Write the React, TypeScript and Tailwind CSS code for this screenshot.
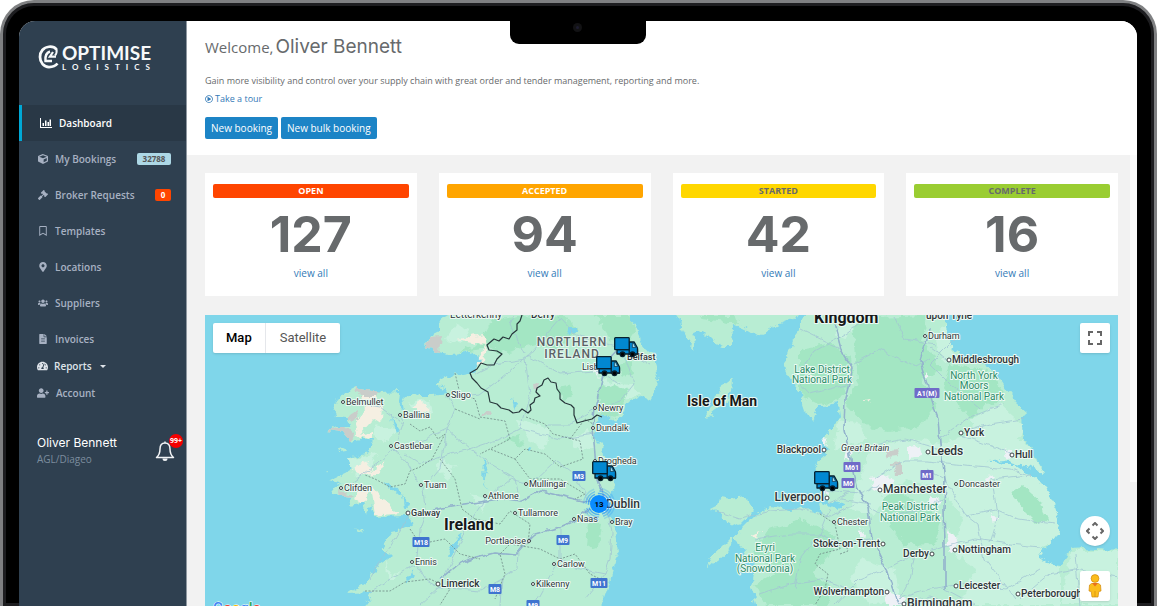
import type { ReactNode } from "react";
import {
  FaCube,
  FaFileAlt,
  FaGavel,
  FaMapMarkerAlt,
  FaRegBookmark,
  FaRegPlayCircle,
  FaTachometerAlt,
  FaUserPlus,
  FaUsers,
} from "react-icons/fa";

function ChartIcon() {
  return (
    <svg viewBox="0 0 24 20" className="h-[10px] w-3" fill="currentColor" aria-hidden="true">
      <path d="M0 0h2v18h22v2H0zM5 10h3v6H5zM10 5h3v11h-3zM15 8h3v8h-3zM19 3h3v13h-3z" />
    </svg>
  );
}

function BellIcon() {
  return (
    <svg viewBox="0 0 20 22" className="h-[22px] w-5" fill="none" stroke="#f2f4f6" aria-hidden="true">
      <path d="M10 1.500v2M10 3C6.500 3 5 5.800 5 9c0 4.500-1.200 6.500-3.500 8.500h17C16.200 15.500 15 13.500 15 9c0-3.200-1.500-6-5-6z" strokeWidth="1.500" strokeLinejoin="round" />
      <path d="M7.500 18.500h5a2.500 2.500 0 0 1-5 0z" fill="#f2f4f6" stroke="none" />
    </svg>
  );
}

function Logo() {
  return (
    <div className="flex items-start gap-[3px] pl-[19px] pt-[22px] text-[#f7f9fa]">
      <svg viewBox="0 0 42 48" className="mt-[2px] h-6 w-[21px]" fill="none" stroke="currentColor" aria-label="Optimise Logistics" role="img">
        <path d="M37 9C33 4 27 3 22 3.500C11 4.500 4 13 4 24s8 20 18 20c7 0 13-2 17-7" strokeWidth="5.500" />
        <path d="M37 8C38 14 37 18 34 21" strokeWidth="4" />
        <path d="M24 13C18 15 14 22 15 32h13" strokeWidth="5" />
        <path d="M30 14L24 23h12" strokeWidth="4.500" />
      </svg>
      <div className="font-['Lato',sans-serif]">
        <div className="text-[19px] font-bold leading-5">OPTIMISE</div>
        <div className="text-[8px] font-bold leading-[8px] tracking-[6px]">LOGISTICS</div>
      </div>
    </div>
  );
}

type NavItem = { label: string; icon: ReactNode; badge?: string; badgeClass?: string };

const navItems: NavItem[] = [
  { label: "My Bookings", icon: <FaCube />, badge: "32788", badgeClass: "w-[34px] bg-[#add8e6] text-[#555]" },
  { label: "Broker Requests", icon: <FaGavel />, badge: "0", badgeClass: "w-4 bg-[#ff4500] text-white" },
  { label: "Templates", icon: <FaRegBookmark /> },
  { label: "Locations", icon: <FaMapMarkerAlt /> },
  { label: "Suppliers", icon: <FaUsers /> },
  { label: "Invoices", icon: <FaFileAlt /> },
];

function Sidebar() {
  return (
    <aside className="w-[168px] shrink-0 border-r border-[#8f98a1] bg-[#2f4050] text-[10px] font-semibold text-[#a7b1c2]">
      <div className="h-[84px]">
        <Logo />
      </div>
      <nav aria-label="Main">
        <a href="#dashboard" className="flex h-9 items-center gap-[7px] border-l-[3px] border-[#00a8d6] bg-[#293846] pl-[18px] text-white">
          <ChartIcon />
          Dashboard
        </a>
        {navItems.map((item) => (
          <a key={item.label} href="#section" className="flex h-9 items-center pl-[18px] pr-[15px]">
            <span className="mr-[7px] w-[11px] [&>svg]:mx-auto">{item.icon}</span>
            {item.label}
            {item.badge && (
              <span className={`ml-auto rounded-xs text-center text-[8px] font-bold leading-3 ${item.badgeClass}`}>{item.badge}</span>
            )}
          </a>
        ))}
        <a href="#reports" className="flex h-[18px] items-center pl-[18px] text-[#dfe4ea]">
          <FaTachometerAlt className="mr-[6px] w-[11px]" />
          Reports
          <span className="ml-2 border-x-[3px] border-t-[3px] border-x-transparent border-t-current" />
        </a>
        <a href="#account" className="flex h-9 items-center pl-[18px]">
          <FaUserPlus className="mr-[7px] w-3" />
          Account
        </a>
      </nav>
      <div className="flex items-center justify-between pl-[18px] pr-[11px] pt-6">
        <div>
          <div className="font-['Inter',sans-serif] text-[12px] font-normal leading-4 text-white">Oliver Bennett</div>
          <div className="text-[10px] font-normal leading-4 text-[#7c8d9e]">AGL/Diageo</div>
        </div>
        <button type="button" aria-label="Notifications" className="relative">
          <BellIcon />
          <span className="absolute -right-2 -top-[6px] size-[14px] rounded-full bg-[#f50000] text-center text-[7px] font-bold leading-[14px] text-white">99+</span>
        </button>
      </div>
    </aside>
  );
}

const stats = [
  { label: "OPEN", value: 127, bar: "bg-[#ff4500] text-white" },
  { label: "ACCEPTED", value: 94, bar: "bg-[#ffa500] text-white" },
  { label: "STARTED", value: 42, bar: "bg-[#ffd700] text-[#676a6c]" },
  { label: "COMPLETE", value: 16, bar: "bg-[#9acd32] text-[#676a6c]" },
];

const landPaths = [
  // Ireland
  "M628 310L630 322 637 328 640 342 647 351 655 355 658 373 656 390 650 400 640 398 627 405 625 413 617 423 610 420 603 416 597 423 593 436 602 445 603 458 609 465 614 480 613 492 603 503 604 512 613 518 616 534 619 552 613 572 607 592 600 612H360L373 594 348 595 367 582 377 568 393 557 388 552 380 552 392 532 402 530 413 525 408 517 375 518 371 505 365 515 362 505 350 507 352 498 333 495 332 488 342 485 330 481 343 475 352 470 348 460 360 455 370 453 372 440 361 440 350 443 343 433 327 431 337 427 350 427 345 418 336 417 333 410 337 402 342 394 347 393 355 389 380 393 400 392 399 404 405 412 403 400 410 394 420 397 433 397 446 395 447 389 435 387 440 381 447 377 459 376 470 374 478 367 482 360 472 352 462 355 450 356 438 354 425 347 430 338 440 333 440 323 450 315 455 310z",
  // Great Britain
  "M674 310L681 328 687 340 697 352 693 335 703 333 712 342 723 347 732 347 733 325 744 330 755 337 767 332 780 324 790 320 805 315 797 332 790 351 785 365 788 378 797 385 801 400 805 412 813 423 818 408 838 404 840 417 833 428 823 437 827 455 820 460 814 473 820 492 828 502 845 506 837 511 828 507 818 504 822 516 812 512 803 507 790 512 780 509 770 507 760 515 753 518 740 531 732 544 728 552 719 560 707 570 710 558 719 551 732 538 742 548 749 566 756 562 754 575 751 588 758 612H1123V550L1105 551 1085 549 1070 550 1066 560 1062 567 1053 566 1047 563 1041 559 1040 552 1049 547 1057 535 1059 522 1053 502 1047 488 1030 476 1016 466 1002 466 987 462 1005 461 1017 465 1030 468 1043 473 1035 457 1023 438 1021 418 1028 415 1017 405 1007 392 998 378 987 368 972 361 953 350 950 342 941 310z",
  // Anglesey, Isle of Man and small islands
  "M710 510L718 506 720 498 731 500 745 498 753 512 737 528 727 523 720 514z",
  "M703 421L712 405 719 390 732 380 731 392 724 405 710 417z",
  "M354 529L362 531 366 534 358 532zM339 451L344 449 346 452 340 453zM326 473L330 472 329 475z",
];

const forests = [
  "M455 355L480 345 493 320 520 316 566 318 580 332 552 352 536 345 500 355 490 348z",
  "M595 316H628L636 330 626 345 610 340zM618 365L632 362 634 375 622 378zM598 390L614 385 628 392 617 420 600 418z",
  "M588 522L602 526 598 547 586 549zM504 440L520 436 524 448zM558 390L570 387 575 397 563 400z",
  "M853 325L878 318 928 316 922 340 942 372 920 382 938 405 918 428 890 432 868 428 846 405 858 380z",
  "M800 350L832 344 850 358 852 382 838 402 818 405 800 396z",
  "M950 366L987 370 1005 395 1003 403 985 405 972 421 957 405 943 388z",
  "M882 500L896 492 920 505 942 520 935 545 905 546 890 528z",
  "M1010 494L1022 486 1041 503 1047 522 1037 524 1024 511z",
  "M800 520L835 535 830 556 812 575 836 590 825 606H765L756 585 780 571 753 555 768 530 788 526z",
  "M702 320L720 322 738 325 735 316H700z",
];

const paleAreas = [
  "M515 420L550 430 545 450 530 442zM570 440L588 430 596 448 580 452zM440 460L455 465 448 480 436 470zM470 495L489 500 482 514z",
  "M387 562L392 578 400 570 396 580 388 580zM375 425L395 430 388 442 372 438zM348 460L378 454 371 470 355 478zM408 405L430 400 433 415 420 412z",
  "M870 450L905 440 942 444 982 432 1023 440 1043 473 1060 522 1057 538 1040 552 1060 568 1060 606H960L975 570 950 552 964 520 940 490 905 480 875 515 850 510z",
  "M970 422L1000 405 1025 428 1010 450 985 455z",
  "M850 315L865 318 845 340 835 336zM839 420L860 425 868 440 835 450zM860 560L895 570 900 600 870 606 850 580z",
  "M945 325L951 345 955 360 943 363 935 340z",
  "M1071 552L1118 552V606H1062z",
  "M600 380L632 387 640 397 613 402zM455 325L470 330 462 344 445 340z",
];

const sands = [
  "M362 392L372 394 383 406 382 420 370 424 360 435 371 432 371 440 357 437 355 425 364 414z",
  "M355 468L367 462 372 472 386 462 378 475 363 476 352 473zM371 486L378 494 386 505 399 514 375 517 373 500zM356 492L371 490 363 506 354 500zM413 408L422 403 430 410 420 416z",
  "M457 340L485 336 488 345 475 344zM475 368L482 352 487 342 485 364z",
  "M750 536L762 533 758 540zM862 402L870 401 868 405zM805 378L813 375 815 380z",
];

const rocks = [
  "M354 389L379 392 376 398 360 398zM344 419L356 411 360 421 349 422zM327 431L344 426 355 436 348 444zM338 491L353 495 346 502 339 498zM425 347L431 338 442 337 440 355z",
  "M533 385L540 384 539 391 534 390zM481 415L490 410 492 414 484 418zM885 452L896 450 898 458 888 459zM893 465L902 462 902 476 894 476z",
];

const urban = [
  "M823 437L828 442 826 450 822 445zM816 480L824 488 829 500 822 494zM870 480L888 476 895 485 885 495 873 490zM908 448L920 446 922 458 908 460zM846 450L852 455 844 462zM930 496L940 500 936 512 928 506zM950 528L958 545 950 555 945 546zM884 592L905 600 903 606 886 606zM990 474L994 480 985 484zM594 372L604 370 597 378zM623 355L630 352 628 358zM860 530L868 540 860 538zM990 515L999 517 993 524zM1004 450L1014 455 1008 460zM926 372L930 378 924 380zM596 500L604 496 606 512 598 515z",
];

const roads = [
  "M440 580L458 565 475 558 495 553 515 555 521 548 535 535 560 528 576 521 590 510",
  "M411 517L425 514 445 508 472 504 500 500 520 503 541 492 570 499 596 505",
  "M424 489L426 512 420 530 416 565 425 580 440 588 480 592 502 580 517 570 518 553",
  "M606 505L597 480 593 430 595 410 600 390 605 366 620 350",
  "M607 510L612 532 610 560 605 575 585 600",
  "M560 528L560 560 548 580 534 606",
  "M590 505L575 475 557 462",
  "M420 488L408 465 394 450 403 425 401 416M394 450L378 465 345 488M394 450L420 442 447 430M403 425L380 408 346 402",
  "M447 395L455 410 447 430 470 450 500 440 520 430 560 440 595 435M445 398L480 395 500 380 527 357 560 375 595 372",
  "M484 500L510 480 530 485 556 460M447 430L440 470 424 489M485 500L465 530 440 590",
  "M520 503L515 480 490 465 470 450 450 455 420 465 405 455M520 430L530 395 525 360 560 320",
  "M525 355L510 325 515 315M525 360L495 365 475 375M559 318L575 335 605 345 625 350 650 365",
  "M595 410L570 425 545 425M625 356L634 385 620 403 600 410M596 370L620 385",
  "M408 517L395 540 370 580M416 565L390 580 370 593M502 580L500 606M440 588L420 606M560 560L580 570 605 575",
  "M833 320L841 350 853 370 845 400 844 430 850 460 857 490 868 508 872 540 886 570 898 606",
  "M930 330L920 362 930 395 938 420 940 445 945 480 944 510 945 545 945 590",
  "M875 480L905 462 927 462 965 466 1010 470 1030 476M824 492L860 495 880 485M840 500L870 505M828 504L850 494",
  "M715 512L740 520 770 512 800 510 830 518 855 505M868 508L890 520 920 510 945 500M853 365L880 350 915 368 930 360",
  "M938 440L970 418 990 410 1005 405M960 436L1000 450 1012 455M960 434L990 425 1023 420M927 470L945 480 955 498 965 515 978 525 984 560 1000 580 1015 600",
  "M886 570L860 580 845 595 835 606M886 570L915 555 945 548 975 540 1010 545M898 600L930 590 960 585 1005 590 1040 570",
  "M795 380L815 352 845 335 870 316M796 380L810 395 850 385M841 350L800 330M857 455L880 445 905 440 940 450",
  "M760 595L790 585 820 580 850 590M830 510L820 535 800 560 795 590M755 540L790 535 820 535M955 340L930 365 950 385 980 410M949 362L930 348",
  "M965 516L995 510 1018 520 1055 525M993 480L998 516 990 545M990 480L1030 476M1010 545L1040 548M1020 600L1050 575 1075 570 1118 578M1075 555L1080 606",
  "M898 606L930 598 950 606M915 555L910 580 900 600M870 540L840 545 820 535M945 590L975 606M895 318L905 340 935 345",
];

const countyLines = [
  "M410 425L420 432 430 428 438 440 445 435 432 460 420 468 410 472 405 485 390 488 375 480 365 476",
  "M455 374L460 395 475 400 480 418 505 422 510 440 490 450 480 455M526 418L545 425 553 435 580 442 583 460 560 468 545 455 525 450 515 460 490 450",
  "M440 460L455 480 462 510 475 520M515 460L530 480 560 480 585 495 575 500M475 520L500 525 510 512 530 525 528 545 510 545 500 555 505 575 495 600",
  "M510 545L540 550 560 560 575 555 590 575 600 580M365 592L390 592 405 583 430 580 450 590 440 606M410 530L420 545 445 540 460 555 480 560",
  "M820 515L835 525 840 550 820 555 815 565 828 575 825 590 815 606M840 555L848 552 845 543",
  "M570 440L585 420 593 425M455 410L480 420",
];

type Label = {
  t: string;
  x: number;
  y: number;
  s?: number;
  w?: number;
  a?: "start" | "middle" | "end";
  c?: string;
  dot?: boolean;
  italic?: boolean;
};

const park = "#2b8a66";

const labels: Label[] = [
  { t: "Letterkenny", x: 450, y: 319, s: 10 },
  { t: "Derry", x: 531, y: 319, s: 10, w: 500 },
  { t: "Belmullet", x: 346, y: 406, dot: true },
  { t: "Ballina", x: 403, y: 419, dot: true },
  { t: "Castlebar", x: 394, y: 450, dot: true },
  { t: "Clifden", x: 344, y: 492, dot: true },
  { t: "Tuam", x: 424, y: 489, dot: true },
  { t: "Galway", x: 411, y: 517, w: 500, dot: true },
  { t: "Ennis", x: 415, y: 566, dot: true },
  { t: "Sligo", x: 451, y: 399, dot: true },
  { t: "Newry", x: 598, y: 412, dot: true },
  { t: "Dundalk", x: 596, y: 432, dot: true },
  { t: "Drogheda", x: 598, y: 465, dot: true },
  { t: "Mullingar", x: 529, y: 488, dot: true },
  { t: "Athlone", x: 488, y: 500, dot: true },
  { t: "Tullamore", x: 518, y: 517, dot: true },
  { t: "Naas", x: 577, y: 523, dot: true },
  { t: "Bray", x: 615, y: 526, dot: true },
  { t: "Portlaoise", x: 526, y: 545, a: "end", dot: true },
  { t: "Carlow", x: 557, y: 568, dot: true },
  { t: "Kilkenny", x: 536, y: 588, dot: true },
  { t: "Limerick", x: 441, y: 588, w: 500, dot: true, s: 10 },
  { t: "Dublin", x: 606, y: 509, s: 12, w: 500 },
  { t: "Belfast", x: 627, y: 361, w: 500 },
  { t: "Lisburn", x: 582, y: 371 },
  { t: "Ireland", x: 444, y: 531, s: 16, w: 700, c: "#16181a" },
  { t: "Isle of Man", x: 687, y: 407, s: 14, w: 700, c: "#16181a" },
  { t: "Kingdom", x: 814, y: 324, s: 16, w: 700, c: "#16181a" },
  { t: "Lake District", x: 822, y: 374, s: 10, a: "middle", c: park },
  { t: "National Park", x: 822, y: 384, s: 10, a: "middle", c: park },
  { t: "North York", x: 974, y: 380, s: 10, a: "middle", c: park },
  { t: "Moors", x: 974, y: 390, s: 10, a: "middle", c: park },
  { t: "National Park", x: 974, y: 401, s: 10, a: "middle", c: park },
  { t: "Peak District", x: 910, y: 511, s: 10, a: "middle", c: park },
  { t: "National Park", x: 910, y: 522, s: 10, a: "middle", c: park },
  { t: "Eryri", x: 765, y: 552, s: 10, a: "middle", c: park },
  { t: "National Park", x: 765, y: 563, s: 10, a: "middle", c: park },
  { t: "(Snowdonia)", x: 765, y: 573, s: 10, a: "middle", c: park },
  { t: "Blackpool", x: 821, y: 454, s: 10, a: "end", w: 500, dot: true },
  { t: "Great Britain", x: 841, y: 452, italic: true },
  { t: "Liverpool", x: 824, y: 502, s: 12, a: "end", w: 500, dot: true },
  { t: "Chester", x: 837, y: 526, dot: true },
  { t: "Manchester", x: 883, y: 494, s: 12, w: 500, dot: true },
  { t: "Stoke-on-Trent", x: 880, y: 548, s: 10, a: "end", w: 500, dot: true },
  { t: "Wolverhampton", x: 884, y: 596, s: 10, a: "end", w: 500, dot: true },
  { t: "Birmingham", x: 907, y: 608, s: 12, w: 500, dot: true },
  { t: "Derby", x: 929, y: 558, s: 10, a: "end", w: 500, dot: true },
  { t: "Nottingham", x: 958, y: 554, s: 10, w: 500, dot: true },
  { t: "Leicester", x: 959, y: 590, w: 500, dot: true, s: 10 },
  { t: "Peterborough", x: 1021, y: 598, s: 10, w: 500, dot: true },
  { t: "Doncaster", x: 959, y: 488, dot: true },
  { t: "Hull", x: 1015, y: 459, s: 10, w: 500, dot: true },
  { t: "Leeds", x: 931, y: 456, s: 12, w: 500, dot: true },
  { t: "York", x: 964, y: 437, s: 10, w: 500, dot: true },
  { t: "Middlesbrough", x: 952, y: 364, s: 10, w: 500, dot: true },
  { t: "Durham", x: 928, y: 340, dot: true },
  { t: "upon Tyne", x: 926, y: 320, s: 10, w: 500 },
];

const shields = [
  { t: "M18", x: 421, y: 543, c: "#3f74cf" },
  { t: "M9", x: 563, y: 541, c: "#3f74cf" },
  { t: "M3", x: 579, y: 477, c: "#3f74cf" },
  { t: "M11", x: 599, y: 584, c: "#3f74cf" },
  { t: "M8", x: 495, y: 590, c: "#3f74cf" },
  { t: "M9", x: 533, y: 606, c: "#3f74cf" },
  { t: "M61", x: 852, y: 468, c: "#6f6bc8" },
  { t: "M6", x: 848, y: 484, c: "#6f6bc8" },
  { t: "M1", x: 927, y: 476, c: "#6f6bc8" },
  { t: "A1(M)", x: 927, y: 394, c: "#6f6bc8" },
];

function Truck({ x, y }: { x: number; y: number }) {
  return (
    <g transform={`translate(${x} ${y})`} stroke="#06202e" strokeWidth="1.300" strokeLinejoin="round">
      <path d="M3 12.500h20.500v4.500H3z" fill="#0288d1" />
      <path d="M15.200 5h5l3.300 6v6h-8.300z" fill="#0288d1" />
      <path d="M18.400 6.500h1.300l2 4h-3.300z" fill="#9ed9ef" strokeWidth=".6" />
      <rect x=".7" y=".7" width="14.500" height="12" rx=".8" fill="#0288d1" />
      <circle cx="8.500" cy="17.300" r="2.300" fill="#000" />
      <circle cx="18.500" cy="17.300" r="2.300" fill="#000" />
    </g>
  );
}

function MapDrawing() {
  return (
    <svg viewBox="205 316 913 291" className="block w-full font-['Roboto',sans-serif]" role="img" aria-label="Map of Ireland and Great Britain">
      <defs>
        <filter id="coast" x="-5%" y="-5%" width="110%" height="110%" colorInterpolationFilters="sRGB">
          <feTurbulence type="fractalNoise" baseFrequency="0.13" numOctaves="3" seed="4" />
          <feDisplacementMap in="SourceGraphic" scale="9" xChannelSelector="R" yChannelSelector="G" />
        </filter>
        <filter id="line" x="-5%" y="-5%" width="110%" height="110%" colorInterpolationFilters="sRGB">
          <feTurbulence type="fractalNoise" baseFrequency="0.1" numOctaves="2" seed="9" />
          <feDisplacementMap in="SourceGraphic" scale="6" xChannelSelector="R" yChannelSelector="G" />
        </filter>
        <clipPath id="land">
          {landPaths.map((d) => (
            <path key={d} d={d} />
          ))}
        </clipPath>
      </defs>
      <rect x="200" y="310" width="930" height="310" fill="#7fd6ea" />
      <g filter="url(#coast)">
        {landPaths.map((d) => (
          <path key={d} d={d} fill="#b8edd3" />
        ))}
        <g clipPath="url(#land)">
          <path d={paleAreas.join("")} fill="#c8f2df" />
          <path d={forests.join("")} fill="#a3e6c3" />
          <path d={sands.join("")} fill="#f5efe2" />
          <path d={rocks.join("")} fill="#c9cdca" />
          <path d={urban.join("")} fill="#eef1f6" />
          <path d="M567 328h10l1 6-8 2zM484 459l3 8-3 14 2 10-3-8zM456 540l6-5-5 14-8 12 1-10zM511 398l6 8-2 6zM526 449l5 1-4 2zM383 484l14 4 6 8-8-3zM392 418l8 12-5 4zM403 495l6 12-4 2zM405 582l8-12 2 8-7 6z" fill="#7fd6ea" />
        </g>
      </g>
      <g filter="url(#line)" fill="none" strokeLinejoin="round">
        <path d={roads.join("")} stroke="#a2c5d3" strokeWidth=".8" />
        <path d={`${roads[0]}${roads[1]}${roads[3]}${roads[14]}${roads[15]}`} stroke="#93b3cc" strokeWidth="1.500" />
      </g>
      <path d={countyLines.join("")} fill="none" stroke="#6f8a86" strokeWidth=".8" strokeDasharray="2 1.500" />
      <path
        d="M522 316L520 322 517 325 517 331 512 335 509 340 503 338 499 342 494 340 487 346 489 351 497 352 502 355 497 360 494 366 487 366 481 364 477 370 470 374 472 379 477 384 481 389 488 393 490 403 497 405 501 409 509 411 513 414 519 413 522 410 528 414 531 411 530 406 534 403 535 399 540 397 536 393 537 389 542 386 544 381 548 379 551 383 556 384 557 390 560 394 560 400 565 404 571 406 574 409 574 416 577 424 584 422 592 420 597 416 602 418"
        fill="none"
        stroke="#26353a"
        strokeWidth="1.200"
        strokeLinejoin="round"
      />
      <g fill="#5b6266" fontSize="12" fontWeight="500" letterSpacing="1" textAnchor="middle" stroke="#e4f7ef" strokeWidth="2" paintOrder="stroke">
        <text x="572" y="347">NORTHERN</text>
        <text x="572" y="359">IRELAND</text>
      </g>
      {labels.map((l) => (
        <g key={`${l.t}${l.x}${l.y}`}>
          {l.dot && (
            <circle cx={l.a === "end" ? l.x + 3 : l.x - 3} cy={l.y - 3} r={(l.w ?? 400) > 400 ? 2 : 1.5} fill="#fff" stroke="#3c4246" strokeWidth="1" />
          )}
          <text
            x={l.x}
            y={l.y}
            fontSize={l.s ?? 9}
            fontWeight={l.w ?? 400}
            fontStyle={l.italic ? "italic" : "normal"}
            textAnchor={l.a ?? "start"}
            fill={l.c ?? "#2e3438"}
            stroke="#ecfaf4"
            strokeWidth="2"
            strokeLinejoin="round"
            paintOrder="stroke"
          >
            {l.t}
          </text>
        </g>
      ))}
      {shields.map((s) => {
        const w = s.t.length * 4 + 5;
        return (
          <g key={`${s.t}${s.x}`}>
            <rect x={s.x - w / 2} y={s.y - 5} width={w} height="10" rx="1" fill={s.c} />
            <text x={s.x} y={s.y + 3} fontSize="7" fontWeight="700" fill="#fff" textAnchor="middle">
              {s.t}
            </text>
          </g>
        );
      })}
      <Truck x={614} y={338} />
      <Truck x={596} y={357} />
      <Truck x={592} y={462} />
      <Truck x={814} y={472} />
      <g fill="none" stroke="#0a84ff">
        <circle cx="599" cy="505" r="10.500" strokeOpacity=".6" strokeWidth="1.500" strokeDasharray="13 3" />
        <circle cx="599" cy="505" r="13" strokeOpacity=".4" strokeWidth="1.500" strokeDasharray="16 4.400" />
        <circle cx="599" cy="505" r="15.500" strokeOpacity=".2" strokeWidth="1.500" strokeDasharray="19 5.300" />
        <circle cx="599" cy="505" r="9" fill="#0a8cff" stroke="none" />
      </g>
      <text x="599" y="508" fontSize="8" fontWeight="700" textAnchor="middle">
        13
      </text>
      <text x="213" y="614" fontSize="15" fontWeight="500" stroke="#fff" strokeWidth="1" paintOrder="stroke">
        <tspan fill="#4285f4">G</tspan>
        <tspan fill="#ea4335">o</tspan>
        <tspan fill="#fbbc04">o</tspan>
        <tspan fill="#4285f4">g</tspan>
        <tspan fill="#34a853">l</tspan>
        <tspan fill="#ea4335">e</tspan>
      </text>
    </svg>
  );
}

function MapPanel() {
  return (
    <section className="relative mt-[19px] overflow-hidden bg-[#7fd6ea] font-['Roboto',sans-serif]">
      <MapDrawing />
      <div className="absolute left-2 top-2 flex h-[30px] rounded-xs bg-white text-[13px] shadow">
        <button type="button" className="px-[13px] font-medium text-black">Map</button>
        <button type="button" className="border-l border-gray-200 px-[14px] text-[#565656]">Satellite</button>
      </div>
      <button type="button" aria-label="Toggle fullscreen" className="absolute right-2 top-2 flex size-[30px] items-center justify-center rounded-xs bg-white shadow">
        <svg viewBox="0 0 14 14" className="size-[14px]" fill="none" stroke="#666" strokeWidth="2">
          <path d="M1 5V1h4M9 1h4v4M13 9v4H9M5 13H1V9" />
        </svg>
      </button>
      <div className="absolute bottom-[5px] right-2 flex flex-col gap-[25px]">
        <button type="button" aria-label="Map camera controls" className="flex size-[30px] items-center justify-center rounded-full bg-white shadow">
          <svg viewBox="0 0 18 18" className="size-[18px]" fill="none" stroke="#666" strokeWidth="2">
            <path d="M6.500 3.500L9 1l2.500 2.500M6.500 14.500L9 17l2.500-2.500M3.500 6.500L1 9l2.500 2.500M14.500 6.500L17 9l-2.500 2.500" />
          </svg>
        </button>
        <button type="button" aria-label="Street View" className="flex size-[30px] items-center justify-center rounded-xs bg-white shadow">
          <svg viewBox="0 0 14 24" className="h-6 w-[14px]" fill="#fbbd1c" stroke="#d2890b" strokeWidth=".7">
            <path d="M3.500 9.500L1.500 11 1 17l2.200.5L4 23h6l.8-5.500L13 17l-.5-6-2-1.500z" />
            <circle cx="7" cy="4.500" r="3.900" />
            <path d="M4 9h6l-3 3.500z" fill="#e8711c" stroke="none" />
            <path d="M7 17v6" />
          </svg>
        </button>
      </div>
    </section>
  );
}

export default function App() {
  return (
    <div className="h-screen overflow-hidden bg-white font-['Open_Sans',sans-serif]">
      <div className="relative min-h-full rounded-t-[34px] border-x-[3px] border-t-[3px] border-[#7f8082] bg-black pl-4 pr-[17px] pt-[18px] shadow-[inset_0_0_0_3px_#1d1d20]">
        <div className="absolute inset-x-0 top-4 flex justify-center pr-[2px]">
          <div className="flex h-[25px] w-[136px] justify-center rounded-b-[9px] bg-black pt-1">
            <div className="flex size-[9px] items-center justify-center rounded-full bg-[#121214]">
              <div className="size-[3px] rounded-full bg-[#1d1c30]" />
            </div>
          </div>
        </div>
        <div className="flex overflow-hidden rounded-t-2xl bg-[#f2f2f2]">
          <Sidebar />
          <div className="min-w-0 flex-1">
            <header className="h-[134px] bg-white px-[18px] pt-3 text-[#676a6c]">
              <h1 className="flex items-baseline gap-[2px] leading-7">
                <span className="text-[15px]">Welcome,</span>
                <span className="font-['Inter',sans-serif] text-[19px]">Oliver Bennett</span>
              </h1>
              <p className="mt-3 text-[9px] leading-4">
                Gain more visibility and control over your supply chain with great order and tender management, reporting and more.
              </p>
              <a href="#tour" className="mt-[2px] flex w-fit items-center gap-[2px] text-[9px] leading-4 text-[#337ab7]">
                <FaRegPlayCircle className="size-2" />
                Take a tour
              </a>
              <div className="mt-[10px] flex gap-[3px] text-[10px] leading-[22px] text-white">
                <button type="button" className="rounded-xs bg-[#1c84c6] px-[6px]">New booking</button>
                <button type="button" className="rounded-xs bg-[#1c84c6] px-[6px]">New bulk booking</button>
              </div>
            </header>
            <main className="flex">
              <div className="min-w-0 flex-1 pl-[18px] pr-3 pt-[18px]">
                <div className="grid grid-cols-4 gap-[22px]">
                  {stats.map((s) => (
                    <section key={s.label} className="h-[123px] bg-white px-2 pt-[11px] text-center">
                      <h2 className={`rounded-xs text-[9px] font-bold leading-[14px] ${s.bar}`}>{s.label}</h2>
                      <div className="mt-[11px] font-['Inter',sans-serif] text-[50px] font-bold leading-[50px] text-[#676a6c]">{s.value}</div>
                      <a href="#orders" className="mt-[6px] block text-[10px] leading-4 text-[#337ab7]">view all</a>
                    </section>
                  ))}
                </div>
                <MapPanel />
              </div>
              <div className="h-[327px] w-[7px] bg-[#fbfbfb]" />
            </main>
          </div>
        </div>
      </div>
    </div>
  );
}
